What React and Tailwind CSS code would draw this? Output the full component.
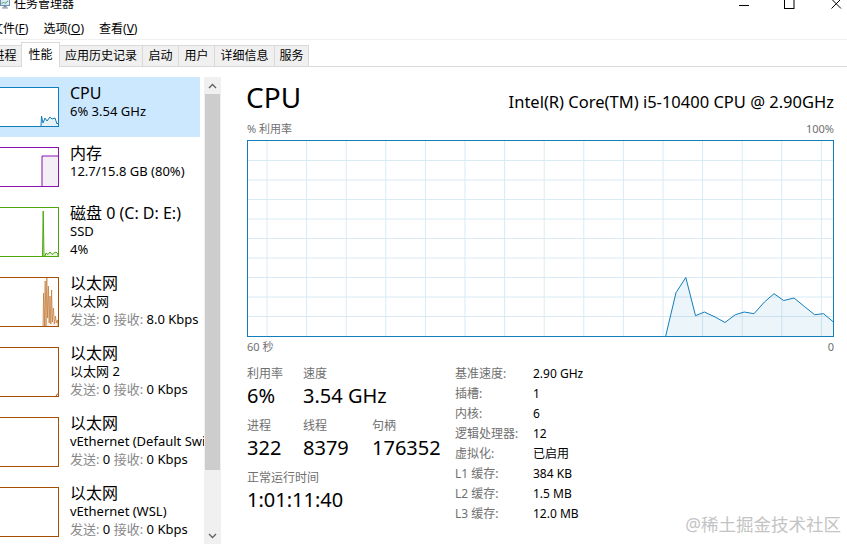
import React from "react";

const chartPts = [
  [417.7, 195], [428, 151.7], [437.8, 136.5], [447.5, 174.7], [456.4, 171], [467.2, 176],
  [477, 181.5], [487.3, 173.7], [496.2, 171], [506, 172.7], [516.4, 161], [526, 152.7],
  [535.7, 159.5], [546, 157], [556.2, 165.3], [566.6, 173.7], [575.6, 172.7], [586, 181.5],
];

function BigChart() {
  const w = 585;
  const h = 195;
  const hLines = [];
  for (let k = 1; k < 10; k++) hLines.push(k * 19.5);
  const vLines = [];
  for (let k = 0; k < 15; k++) vLines.push(19 + k * 39.6);
  const line = chartPts.map((p) => p.join(",")).join(" ");
  const area = `${chartPts[0][0]},${h} ${line} ${w},${h}`;
  return (
    <svg width={w} height={h} className="block">
      {hLines.map((y) => (
        <line key={"h" + y} x1="0" x2={w} y1={y} y2={y} stroke="#d9eaf4" strokeWidth="1" />
      ))}
      {vLines.map((x) => (
        <line key={"v" + x} x1={x} x2={x} y1="0" y2={h} stroke="#d9eaf4" strokeWidth="1" />
      ))}
      <polygon points={area} fill="#117dbb" fillOpacity="0.08" />
      <polyline points={line} fill="none" stroke="#117dbb" strokeWidth="1" />
    </svg>
  );
}

function CpuMini() {
  const pts = "41,38 41.5,28 43,35 45,30 47,33 50,29 52,31 55,30 57,36 58,35 58,38";
  return (
    <div className="h-[40px] w-[59px] border border-l-0 border-[#117dbb] bg-white">
      <svg width="58" height="38" className="block">
        <polygon points={pts} fill="#117dbb" fillOpacity="0.1" />
        <polyline points="41,38 41.5,28 43,35 45,30 47,33 50,29 52,31 55,30 57,36 58,35" fill="none" stroke="#117dbb" strokeWidth="1" />
      </svg>
    </div>
  );
}

function MemMini() {
  return (
    <div className="h-[40px] w-[59px] border border-l-0 border-[#8b12ae] bg-white">
      <svg width="58" height="38" className="block">
        <rect x="42" y="8" width="16" height="30" fill="#f4eef7" />
        <polyline points="42,38 42,8 58,8" fill="none" stroke="#8b12ae" strokeWidth="1" />
      </svg>
    </div>
  );
}

function DiskMini() {
  const pts = "42.5,48 43.2,3 44,48 45,48 46,45 48,46.5 50,44 52,46.5 54,45 56,44 58,46 58,48";
  return (
    <div className="h-[50px] w-[59px] border border-l-0 border-[#4da60c] bg-white">
      <svg width="58" height="48" className="block">
        <polygon points={pts} fill="#4da60c" fillOpacity="0.12" />
        <polyline points={pts} fill="none" stroke="#4da60c" strokeWidth="1" />
      </svg>
    </div>
  );
}

function EthMini({ active, dot }) {
  const pts =
    "43,48 43.6,15 44.4,48 45.2,3 46,48 46.8,0 47.6,40 48.4,8 49.2,45 50,18 50.8,46 51.6,12 52.4,44 53.4,30 54.4,46 55.4,38 56.4,45 57.4,42 58,46 58,48";
  return (
    <div className="h-[50px] w-[59px] border border-l-0 border-[#a74f01] bg-white">
      <svg width="58" height="48" className="block">
        {active && (
          <>
            <polygon points={pts} fill="#a74f01" fillOpacity="0.08" />
            <polyline points={pts} fill="none" stroke="#c0762e" strokeWidth="0.7" />
          </>
        )}
        {dot && <polyline points="56,48 57.5,46 58,46" fill="none" stroke="#a74f01" strokeWidth="1" />}
      </svg>
    </div>
  );
}

function Item({ selected, tall, graph, title, lines }) {
  return (
    <div
      className={`flex w-[200px] whitespace-nowrap pt-[7px] ${tall ? "h-[70px]" : "h-[60px]"} ${
        selected ? "bg-[#cce8ff]" : ""
      }`}
    >
      <div className="mt-[3px]">{graph}</div>
      <div className="ml-[11px] flex flex-col">
        <div className="text-[16px] leading-[18px] text-black">{title}</div>
        {lines.map((l, i) => (
          <div key={i} className="text-[13px] leading-[18px] text-black">
            {l}
          </div>
        ))}
      </div>
    </div>
  );
}

function NetLine({ recv }) {
  return (
    <span>
      <span className="text-[#8a8a8a]">发送:</span> 0 <span className="text-[#8a8a8a]">接收:</span> {recv}
    </span>
  );
}

const tabs = [
  { t: "进程", w: "w-[34px]" },
  { t: "性能", w: "w-[39px]", sel: true },
  { t: "应用历史记录", w: "w-[83px]" },
  { t: "启动", w: "w-[36px]" },
  { t: "用户", w: "w-[36px]" },
  { t: "详细信息", w: "w-[60px]" },
  { t: "服务", w: "w-[34px]" },
];

const info = [
  ["基准速度:", "2.90 GHz"],
  ["插槽:", "1"],
  ["内核:", "6"],
  ["逻辑处理器:", "12"],
  ["虚拟化:", "已启用"],
  ["L1 缓存:", "384 KB"],
  ["L2 缓存:", "1.5 MB"],
  ["L3 缓存:", "12.0 MB"],
];

export default function App() {
  return (
    <div className="relative h-[544px] w-[847px] overflow-hidden bg-white font-['Noto_Sans','Noto_Sans_CJK_SC',sans-serif] text-black">
      {/* title bar */}
      <div className="flex h-[20px] items-start">
        <svg width="11" height="10" className="-mt-[1px] block">
          <rect x="0.5" y="0.5" width="9" height="6" fill="#dbe9f6" stroke="#6f8fae" />
          <polyline points="1.5,5 3.5,3 5,4.5 8,2" fill="none" stroke="#2f8a3a" strokeWidth="0.8" />
          <rect x="3.5" y="7" width="3" height="1.5" fill="#7a8a99" />
          <rect x="2" y="8.5" width="6" height="1" fill="#7a8a99" />
        </svg>
        <span className="-mt-[3px] ml-[3px] text-[12px] leading-[14px]">任务管理器</span>
        <div className="ml-auto flex items-start">
          <svg width="11" height="10" className="block">
            <line x1="0" x2="10" y1="5.5" y2="5.5" stroke="#000" strokeWidth="1" />
          </svg>
          <svg width="11" height="10" className="ml-[34px] block">
            <rect x="0.5" y="-2" width="9.5" height="10.5" fill="none" stroke="#000" strokeWidth="1" />
          </svg>
          <svg width="11" height="10" className="ml-[36px] mr-[5px] block">
            <line x1="0.5" y1="-1" x2="10" y2="8.5" stroke="#000" strokeWidth="1" />
            <line x1="10" y1="-1" x2="0.5" y2="8.5" stroke="#000" strokeWidth="1" />
          </svg>
        </div>
      </div>

      {/* menu bar */}
      <div className="flex h-[20px] items-center gap-[15px] border-b border-[#f0f0f0] pb-[1px] text-[12px] leading-[16px]">
        <span className="-ml-[9px]">
          文件(<u>F</u>)
        </span>
        <span>
          选项(<u>O</u>)
        </span>
        <span>
          查看(<u>V</u>)
        </span>
      </div>

      {/* tabs */}
      <div className="flex h-[27px] items-end border-b border-[#d9d9d9]">
        <div className="-ml-[12px] flex items-end">
          {tabs.map((tab) =>
            tab.sel ? (
              <div
                key={tab.t}
                className={`-mb-[1px] -ml-[1px] flex h-[25px] items-start justify-center border border-b-0 border-[#d9d9d9] bg-white pt-[3px] text-[12px] leading-[18px] ${tab.w}`}
              >
                {tab.t}
              </div>
            ) : (
              <div
                key={tab.t}
                className={`flex h-[21px] items-center justify-center border-r border-t border-[#d9d9d9] bg-[#f0f0f0] text-[12px] leading-[18px] ${tab.w}`}
              >
                {tab.t}
              </div>
            )
          )}
        </div>
      </div>

      {/* body */}
      <div className="flex">
        <div className="w-[204px] overflow-hidden pt-[10px]">
          <Item selected graph={<CpuMini />} title="CPU" lines={["6% 3.54 GHz"]} />
          <Item graph={<MemMini />} title="内存" lines={["12.7/15.8 GB (80%)"]} />
          <Item tall graph={<DiskMini />} title="磁盘 0 (C: D: E:)" lines={["SSD", "4%"]} />
          <Item tall graph={<EthMini active />} title="以太网" lines={["以太网", <NetLine recv="8.0 Kbps" />]} />
          <Item tall graph={<EthMini dot />} title="以太网" lines={["以太网 2", <NetLine recv="0 Kbps" />]} />
          <Item
            tall
            graph={<EthMini />}
            title="以太网"
            lines={["vEthernet (Default Switch)", <NetLine recv="0 Kbps" />]}
          />
          <Item tall graph={<EthMini />} title="以太网" lines={["vEthernet (WSL)", <NetLine recv="0 Kbps" />]} />
        </div>

        {/* scrollbar */}
        <div className="mt-[10px] flex h-[467px] w-[17px] flex-col bg-[#f0f0f0]">
          <div className="flex h-[17px] items-center justify-center">
            <svg width="9" height="6" className="block">
              <polyline points="1,5 4.5,1.5 8,5" fill="none" stroke="#606060" strokeWidth="1.3" />
            </svg>
          </div>
          <div className="mx-[1px] h-[376px] bg-[#cdcdcd]" />
          <div className="flex-1" />
          <div className="flex h-[17px] items-center justify-center">
            <svg width="9" height="6" className="block">
              <polyline points="1,1 4.5,4.5 8,1" fill="none" stroke="#606060" strokeWidth="1.3" />
            </svg>
          </div>
        </div>

        {/* right panel */}
        <div className="flex-1 pl-[25px] pr-[13px]">
          <div className="mt-[12px] flex items-baseline justify-between">
            <div className="text-[28px] leading-[36px]">CPU</div>
            <div className="text-[16.5px] leading-[20px]">Intel(R) Core(TM) i5-10400 CPU @ 2.90GHz</div>
          </div>
          <div className="ml-[1px] mt-[7px] flex justify-between text-[11px] leading-[14px] text-[#707070]">
            <span>% 利用率</span>
            <span>100%</span>
          </div>
          <div className="ml-[1px] mt-[4px] h-[197px] border border-[#117dbb]">
            <BigChart />
          </div>
          <div className="ml-[1px] mt-[3px] flex justify-between text-[11px] leading-[14px] text-[#707070]">
            <span>60 秒</span>
            <span>0</span>
          </div>

          <div className="ml-[1px] mt-[10px] flex">
            <div className="w-[208px] pt-[2px]">
              <div className="flex">
                <div className="w-[56px]">
                  <div className="text-[12px] leading-[16px] text-[#707070]">利用率</div>
                  <div className="mt-[2px] text-[20px] leading-[24px]">6%</div>
                </div>
                <div>
                  <div className="text-[12px] leading-[16px] text-[#707070]">速度</div>
                  <div className="mt-[2px] text-[20px] leading-[24px]">3.54 GHz</div>
                </div>
              </div>
              <div className="mt-[10px] flex">
                <div className="w-[56px]">
                  <div className="text-[12px] leading-[16px] text-[#707070]">进程</div>
                  <div className="mt-[2px] text-[20px] leading-[24px]">322</div>
                </div>
                <div className="w-[69px]">
                  <div className="text-[12px] leading-[16px] text-[#707070]">线程</div>
                  <div className="mt-[2px] text-[20px] leading-[24px]">8379</div>
                </div>
                <div>
                  <div className="text-[12px] leading-[16px] text-[#707070]">句柄</div>
                  <div className="mt-[2px] text-[20px] leading-[24px]">176352</div>
                </div>
              </div>
              <div className="mt-[10px]">
                <div className="text-[12px] leading-[16px] text-[#707070]">正常运行时间</div>
                <div className="mt-[2px] text-[20px] leading-[24px]">1:01:11:40</div>
              </div>
            </div>
            <div className="flex flex-col">
              {info.map(([k, v]) => (
                <div key={k} className="flex h-[20px] items-center text-[12px] leading-[16px]">
                  <span className="w-[78px] text-[#707070]">{k}</span>
                  <span>{v}</span>
                </div>
              ))}
            </div>
          </div>
        </div>
      </div>

      <div className="absolute bottom-[9px] right-[6px] text-[17.5px] leading-[22px] text-[#c4c4c4]">
        @稀土掘金技术社区
      </div>
    </div>
  );
}
